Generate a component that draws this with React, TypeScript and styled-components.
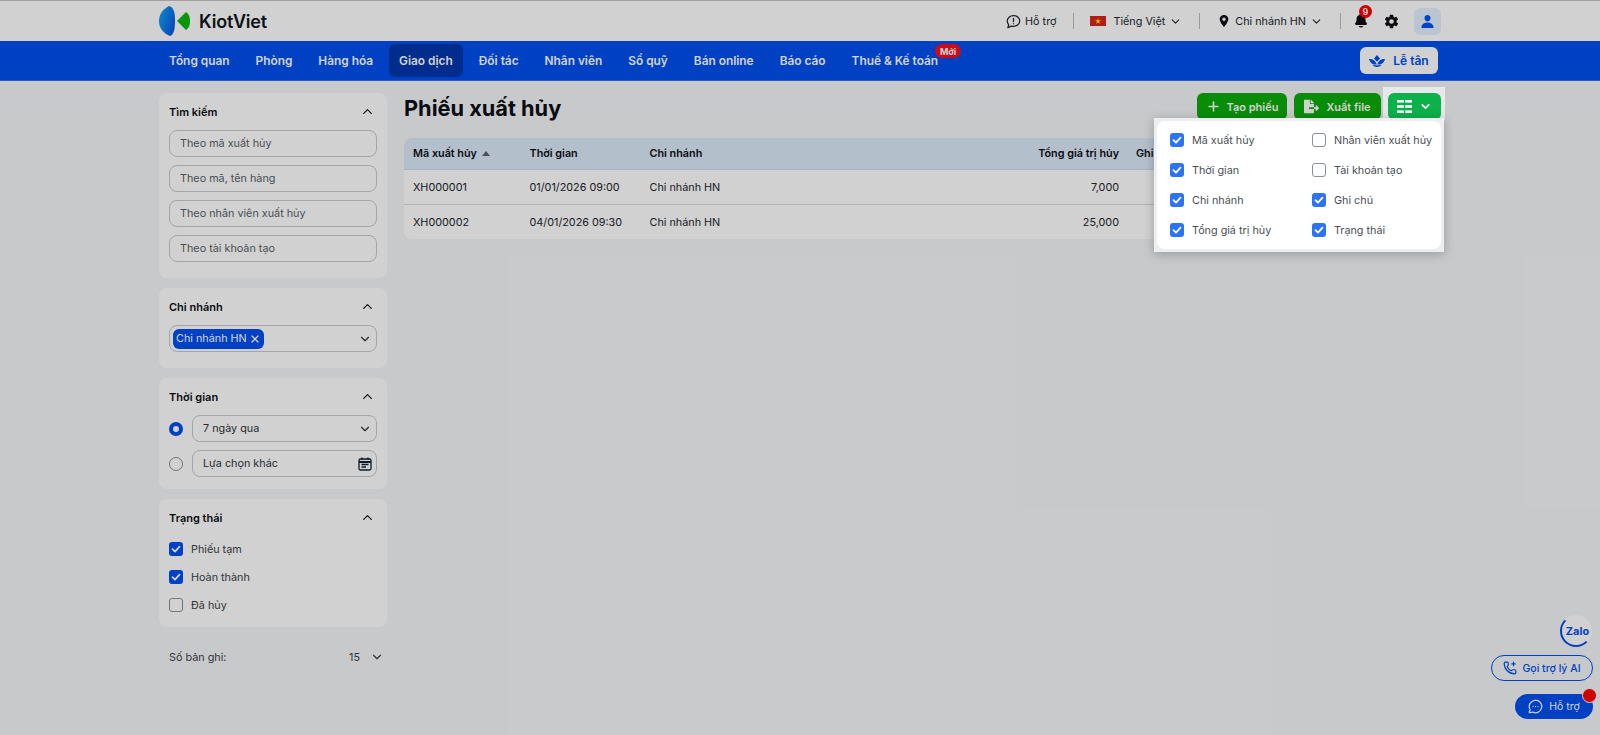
import React from "react";
import styled, { createGlobalStyle } from "styled-components";
import { ChevronDown, ChevronUp, Plus, X, MessageCircleMore } from "lucide-react";
import { IoLocationSharp, IoNotifications, IoSettingsSharp, IoPerson } from "react-icons/io5";
import { FaFileExport } from "react-icons/fa";

const Global = createGlobalStyle`
  html, body { margin: 0; padding: 0; height: 100%; overflow: hidden; }
  body { font-family: Inter, "Noto Sans", sans-serif; font-size: 10.8px; color: #1a1c20; background: #f4f6f8; }
  * { box-sizing: border-box; }
`;

const Page = styled.div`
  position: relative;
  height: 735px;
  width: 1600px;
  overflow: hidden;
`;

const Backdrop = styled.div`
  position: absolute;
  inset: 0;
  z-index: 5;
  background: rgba(0, 0, 0, 0.18);
`;

const Wrap = styled.div`
  width: 1282px;
  margin: 0 auto;
  display: flex;
  align-items: center;
`;

const TopBar = styled.header`
  height: 41px;
  background: #fff;
  border-top: 1px solid #c4c4c4;
`;

const TopInner = styled(Wrap)`
  height: 40px;
`;

const Logo = styled.div`
  display: flex;
  align-items: center;
  gap: 8px;
  font-size: 18px;
  font-weight: 600;
  color: #11151c;
  letter-spacing: -0.2px;
  margin-right: auto;
`;

const TopItem = styled.div`
  display: flex;
  align-items: center;
  gap: 4px;
  color: #23262c;
  svg { flex: none; }
`;

const Divider = styled.span<{ $r?: number }>`
  width: 1px;
  height: 16px;
  background: #bcbcbc;
  margin: 0 ${(p) => p.$r ?? 16}px 0 17px;
`;

const Flag = styled.span`
  display: flex;
  align-items: center;
  justify-content: center;
  width: 16px;
  height: 10px;
  background: #da251d;
  color: #ffe000;
  margin-right: 3px;
`;

const BellBox = styled.div`
  position: relative;
  display: flex;
  width: 16px;
  height: 18px;
  margin-right: 15px;
  color: #0d0f13;
`;

const Count = styled.span`
  position: absolute;
  top: -7px;
  left: 6px;
  width: 13px;
  height: 13px;
  border-radius: 50%;
  background: #f00;
  color: #fff;
  font-size: 9px;
  font-weight: 600;
  display: flex;
  align-items: center;
  justify-content: center;
`;

const Avatar = styled.div`
  width: 27px;
  height: 27px;
  margin-left: 15px;
  border-radius: 6px;
  background: #e5f0ff;
  color: #0052f5;
  display: flex;
  align-items: center;
  justify-content: center;
`;

const NavBar = styled.nav`
  height: 40px;
  background: #0050f0;
  border-bottom: 1px solid #3a6cf0;
`;

const NavInner = styled(Wrap)`
  height: 39px;
`;

const NavList = styled.div`
  display: flex;
  align-items: center;
  gap: 6px;
  margin-right: auto;
`;

const NavItem = styled.div<{ $active?: boolean }>`
  position: relative;
  height: 33px;
  padding: 0 10px;
  display: flex;
  align-items: center;
  border-radius: 6px;
  font-size: 11.86px;
  font-weight: 600;
  color: #fff;
  background: ${(p) => (p.$active ? "#0036ad" : "transparent")};
`;

const NewBadge = styled.span`
  position: absolute;
  top: 0;
  right: -13px;
  width: 26px;
  height: 14px;
  border-radius: 7px;
  background: #f5101f;
  color: #fff;
  font-size: 9px;
  font-weight: 700;
  display: flex;
  align-items: center;
  justify-content: center;
`;

const Reception = styled.button`
  width: 78px;
  height: 27px;
  margin-right: 3px;
  border: 0;
  border-radius: 6px;
  background: #fff;
  color: #0050f0;
  font: 600 12px Inter, sans-serif;
  display: flex;
  align-items: center;
  justify-content: center;
  gap: 8px;
`;

const Body = styled(Wrap)`
  align-items: flex-start;
  gap: 17px;
  padding-top: 12px;
`;

const Sidebar = styled.aside`
  width: 228px;
  flex: none;
  display: flex;
  flex-direction: column;
  gap: 10px;
`;

const Panel = styled.section<{ $pb: number }>`
  background: #fff;
  border-radius: 8px;
  padding: 0 10px ${(p) => p.$pb}px;
`;

const PanelHead = styled.div`
  height: 37px;
  display: flex;
  align-items: center;
  justify-content: space-between;
  font-weight: 600;
  font-size: 11px;
  color: #0c0f14;
  padding-right: 2px;
`;

const FieldStack = styled.div`
  display: flex;
  flex-direction: column;
  gap: 8px;
`;

const Field = styled.div`
  flex: 1 0 auto;
  height: 27px;
  border: 1px solid #c6cad0;
  border-radius: 8px;
  padding: 0 10px;
  display: flex;
  align-items: center;
  justify-content: space-between;
  color: #5a5f68;
  background: #fff;
`;

const ValueField = styled(Field)`
  flex: 1 1 0;
  color: #30343a;
  padding-right: 4px;
`;

const TagField = styled(Field)`
  padding: 0 4px 0 3px;
`;

const Tag = styled.span`
  height: 20px;
  padding: 0 3px;
  border-radius: 6px;
  background: #0050f0;
  color: #fff;
  display: inline-flex;
  align-items: center;
  gap: 2px;
`;

const RadioRow = styled.div`
  display: flex;
  align-items: center;
  gap: 9px;
`;

const Radio = styled.span<{ $on?: boolean }>`
  width: 14px;
  height: 14px;
  flex: none;
  border-radius: 50%;
  background: #fff;
  border: ${(p) => (p.$on ? "4px solid #0050f0" : "1px solid #8b9098")};
`;

const CheckList = styled.div<{ $gap: number }>`
  display: flex;
  flex-direction: column;
  gap: ${(p) => p.$gap}px;
  padding-top: 6px;
`;

const CheckRow = styled.div`
  display: flex;
  align-items: center;
  gap: 8px;
  height: 14px;
  color: #3b3f47;
`;

const Box = styled.span<{ $on?: boolean; $bright?: boolean }>`
  width: 14px;
  height: 14px;
  flex: none;
  border-radius: 3px;
  display: flex;
  align-items: center;
  justify-content: center;
  background: ${(p) => (p.$on ? (p.$bright ? "#2c73f5" : "#0050f0") : "#fff")};
  border: ${(p) => (p.$on ? "0" : "1px solid #8b9098")};
`;

const Records = styled.div`
  display: flex;
  align-items: center;
  padding: 13px 3px 0 10px;
  color: #3b3f47;
  span:first-child { margin-right: auto; }
  svg { margin-left: 10px; }
`;

const Main = styled.main`
  flex: 1;
  min-width: 0;
`;

const TitleRow = styled.div`
  height: 27px;
  display: flex;
  align-items: center;
  justify-content: space-between;
  margin-bottom: 18px;
`;

const Title = styled.h1`
  margin: 2px 0 0;
  font-size: 21.75px;
  font-weight: 700;
  color: #0c0f14;
`;

const Actions = styled.div`
  display: flex;
  gap: 7px;
`;

const ActionBtn = styled.button<{ $w?: number; $gap?: number }>`
  width: ${(p) => p.$w ?? 53}px;
  height: 27px;
  border: 0;
  border-radius: 6px;
  background: #0bac0b;
  color: #fff;
  font: 600 11px Inter, sans-serif;
  white-space: nowrap;
  display: flex;
  align-items: center;
  justify-content: center;
  gap: ${(p) => p.$gap ?? 7}px;
`;

const ColumnSpot = styled.div`
  position: relative;
  z-index: 6;
  display: flex;
  padding: 6px 4px 0 5px;
  margin: -6px -4px 0 -5px;
  background: #e6e8ea;
`;

const ColumnBtn = styled(ActionBtn)`
  background: #0db14b;
`;

const Dropdown = styled.div`
  position: absolute;
  top: 31px;
  right: 1px;
  width: 290px;
  height: 134px;
  padding: 3px;
  background: #eceef0;
  box-shadow: 0 2px 10px rgba(0, 0, 0, 0.25);
`;

const DropInner = styled.div`
  height: 100%;
  padding: 12px 0 0 13px;
  background: #fff;
  border-radius: 8px;
  display: grid;
  grid-template-columns: 142px 1fr;
  grid-auto-rows: 30px;
`;

const DropRow = styled(CheckRow)`
  color: #4a4e56;
  white-space: nowrap;
`;

const Table = styled.div`
  width: 1037px;
  border-radius: 8px;
  overflow: hidden;
  background: #fff;
`;

const Row = styled.div<{ $head?: boolean }>`
  height: ${(p) => (p.$head ? 32 : 34)}px;
  display: grid;
  grid-template-columns: 116.500px 120px 1fr 130px 130px 185px;
  align-items: center;
  padding-left: 9px;
  background: ${(p) => (p.$head ? "#dce9f9" : "#fff")};
  font-weight: ${(p) => (p.$head ? 600 : 400)};
  color: ${(p) => (p.$head ? "#0c0f14" : "#23262c")};
  border-bottom: ${(p) => (p.$head ? "1px solid #c7dcf5" : "none")};
  & + & + & { border-top: 1px solid #d9d9d9; height: 35px; }
`;

const Cell = styled.div<{ $right?: boolean }>`
  text-align: ${(p) => (p.$right ? "right" : "left")};
  padding-right: ${(p) => (p.$right ? "7px" : "0")};
  white-space: nowrap;
`;

const GhiCell = styled(Cell)`
  padding-left: 10px;
`;

const SortMark = styled.span`
  display: inline-block;
  margin-left: 5px;
  width: 0;
  height: 0;
  border-left: 4px solid transparent;
  border-right: 4px solid transparent;
  border-bottom: 5px solid #5a5f68;
  vertical-align: 1px;
`;

const Floats = styled.div`
  position: absolute;
  right: 7px;
  bottom: 16px;
  display: flex;
  flex-direction: column;
  align-items: flex-end;
  gap: 8px;
`;

const ZaloBubble = styled.div`
  width: 32px;
  height: 32px;
  margin-right: 1px;
  padding-left: 3px;
  border-radius: 50%;
  background: #fff;
  border: 2px solid transparent;
  border-left-color: #0050f0;
  border-bottom-color: #0050f0;
  color: #0050f0;
  font-size: 11px;
  font-weight: 700;
  display: flex;
  align-items: center;
  justify-content: center;
`;

const AiPill = styled.div`
  width: 102px;
  height: 26px;
  border-radius: 13px;
  border: 1px solid #0050f0;
  background: #f4f6f8;
  color: #0050f0;
  font-size: 10.5px;
  font-weight: 500;
  display: flex;
  align-items: center;
  justify-content: center;
  gap: 5px;
  margin-bottom: 5px;
`;

const HelpPill = styled.div`
  position: relative;
  width: 78px;
  height: 25px;
  border-radius: 13px;
  background: #0050f0;
  color: #fff;
  font-size: 10.5px;
  display: flex;
  align-items: center;
  justify-content: center;
  gap: 6px;
`;

const RedDot = styled.span`
  position: absolute;
  top: -6px;
  right: -4px;
  width: 15px;
  height: 15px;
  border-radius: 50%;
  background: #f00;
  border: 1px solid #fff;
`;

const Check = () => (
  <svg width="10" height="10" viewBox="0 0 10 10" fill="none" stroke="#fff" strokeWidth="1.8" strokeLinecap="round" strokeLinejoin="round">
    <path d="M1.5 5.2 4 7.6 8.5 2.6" />
  </svg>
);

const CheckItem = ({ label, on }: { label: string; on?: boolean }) => (
  <CheckRow>
    <Box $on={on}>{on && <Check />}</Box>
    {label}
  </CheckRow>
);

const DropItem = ({ label, on }: { label: string; on?: boolean }) => (
  <DropRow>
    <Box $on={on} $bright>{on && <Check />}</Box>
    {label}
  </DropRow>
);

const KiotLogo = () => (
  <svg width="32" height="30" viewBox="0 0 32 30">
    <defs>
      <linearGradient id="lg" x1="0" y1="0" x2="1" y2="0.6">
        <stop offset="0" stopColor="#12aef2" />
        <stop offset="1" stopColor="#0a5ae8" />
      </linearGradient>
    </defs>
    <path d="M10 0C14 1 16 5 16 15 16 25 14 29 11 30 4 27 0 22 0 15 0 8 4 3 10 0Z" fill="url(#lg)" />
    <path d="M18 15 27 6C30 8 31 11 31 15 31 19 30 22 27 24Z" fill="#0bb80b" />
  </svg>
);

const ChatAlert = () => (
  <svg width="15" height="15" viewBox="0 0 24 24" fill="none" stroke="#23262c" strokeWidth="2" strokeLinecap="round" strokeLinejoin="round">
    <path d="M12 2.5c5.6 0 10 3.900 10 8.700s-4.400 8.700-10 8.700c-1.200 0-2.400-.2-3.500-.5L3 22l1.300-4.800C2.900 15.600 2 13.500 2 11.200 2 6.400 6.400 2.500 12 2.500Z" />
    <path d="M12 7v5M12 15.500v.1" />
  </svg>
);

const Star = () => (
  <svg width="6" height="6" viewBox="0 0 10 10" fill="currentColor">
    <path d="M5 0 6.200 3.600H10L7 5.900 8.100 9.500 5 7.300 1.900 9.500 3 5.900 0 3.600H3.800Z" />
  </svg>
);

const Lotus = () => (
  <svg width="16" height="12" viewBox="0 0 16 12" fill="#0050f0">
    <path d="M8 0 11 3.500 8 6.800 5 3.500Z" />
    <path d="M0 4C4 4 7 6 7.600 9.500 3.500 10 1 7.500 0 4ZM16 4C12 4 9 6 8.400 9.500 12.500 10 15 7.500 16 4Z" />
    <path d="M3.500 9.800C6 10.500 10 10.500 12.500 9.800 11.500 11.200 10 12 8 12 6 12 4.500 11.200 3.500 9.800Z" />
  </svg>
);

const CalendarIcon = () => (
  <svg width="14" height="14" viewBox="0 0 14 14" fill="none" stroke="#14202e" strokeWidth="1.300">
    <rect x="1" y="2" width="12" height="11" rx="1.500" />
    <path d="M1 5h12" strokeWidth="2" />
    <path d="M4 .5v2.500M10 .5v2.500M3.500 7.500h7M3.500 10h4.500" />
  </svg>
);

const ColumnsIcon = () => (
  <svg width="15" height="13" viewBox="0 0 15 13" fill="#fff">
    <rect x="0" y="0" width="6.800" height="2.600" />
    <rect x="8.200" y="0" width="6.800" height="2.600" />
    <rect x="0" y="5.200" width="6.800" height="2.600" />
    <rect x="8.200" y="5.200" width="6.800" height="2.600" />
    <rect x="0" y="10.400" width="6.800" height="2.600" />
    <rect x="8.200" y="10.400" width="6.800" height="2.600" />
  </svg>
);

const PhoneSpark = () => (
  <svg width="14" height="14" viewBox="0 0 24 24" fill="none" stroke="currentColor" strokeWidth="2" strokeLinecap="round" strokeLinejoin="round">
    <path d="M13.832 16.568a1 1 0 0 0 1.213-.303l.355-.465A2 2 0 0 1 17 15h3a2 2 0 0 1 2 2v3a2 2 0 0 1-2 2A18 18 0 0 1 2 4a2 2 0 0 1 2-2h3a2 2 0 0 1 2 2v3a2 2 0 0 1-.8 1.600l-.468.351a1 1 0 0 0-.292 1.233 14 14 0 0 0 6.392 6.384" />
    <path d="M18 2v6M15 5h6" />
  </svg>
);

export default function App() {
  return (
    <Page>
      <Global />
      <TopBar>
        <TopInner>
          <Logo><KiotLogo />KiotViet</Logo>
          <TopItem><ChatAlert />Hỗ trợ</TopItem>
          <Divider />
          <TopItem><Flag><Star /></Flag>Tiếng Việt<ChevronDown size={13} /></TopItem>
          <Divider $r={17} />
          <TopItem><IoLocationSharp size={14} color="#0d0f13" />Chi nhánh HN<ChevronDown size={13} /></TopItem>
          <Divider $r={12} />
          <BellBox><IoNotifications size={17} /><Count>9</Count></BellBox>
          <IoSettingsSharp size={15} color="#0d0f13" />
          <Avatar><IoPerson size={15} /></Avatar>
        </TopInner>
      </TopBar>
      <NavBar>
        <NavInner>
          <NavList>
            <NavItem>Tổng quan</NavItem>
            <NavItem>Phòng</NavItem>
            <NavItem>Hàng hóa</NavItem>
            <NavItem $active>Giao dịch</NavItem>
            <NavItem>Đối tác</NavItem>
            <NavItem>Nhân viên</NavItem>
            <NavItem>Sổ quỹ</NavItem>
            <NavItem>Bán online</NavItem>
            <NavItem>Báo cáo</NavItem>
            <NavItem>Thuế &amp; Kế toán<NewBadge>Mới</NewBadge></NavItem>
          </NavList>
          <Reception><Lotus />Lễ tân</Reception>
        </NavInner>
      </NavBar>
      <Body>
        <Sidebar>
          <Panel $pb={16}>
            <PanelHead>Tìm kiếm<ChevronUp size={15} /></PanelHead>
            <FieldStack>
              <Field>Theo mã xuất hủy</Field>
              <Field>Theo mã, tên hàng</Field>
              <Field>Theo nhân viên xuất hủy</Field>
              <Field>Theo tài khoản tạo</Field>
            </FieldStack>
          </Panel>
          <Panel $pb={16}>
            <PanelHead>Chi nhánh<ChevronUp size={15} /></PanelHead>
            <TagField><Tag>Chi nhánh HN<X size={12} strokeWidth={2.500} /></Tag><ChevronDown size={14} color="#30343a" /></TagField>
          </Panel>
          <Panel $pb={12}>
            <PanelHead>Thời gian<ChevronUp size={15} /></PanelHead>
            <FieldStack>
              <RadioRow><Radio $on /><ValueField>7 ngày qua<ChevronDown size={14} /></ValueField></RadioRow>
              <RadioRow><Radio /><ValueField>Lựa chọn khác<CalendarIcon /></ValueField></RadioRow>
            </FieldStack>
          </Panel>
          <Panel $pb={15}>
            <PanelHead>Trạng thái<ChevronUp size={15} /></PanelHead>
            <CheckList $gap={14}>
              <CheckItem label="Phiếu tạm" on />
              <CheckItem label="Hoàn thành" on />
              <CheckItem label="Đã hủy" />
            </CheckList>
          </Panel>
          <Records><span>Số bản ghi:</span><span>15</span><ChevronDown size={14} /></Records>
        </Sidebar>
        <Main>
          <TitleRow>
            <Title>Phiếu xuất hủy</Title>
            <Actions>
              <ActionBtn $w={90} $gap={6}><Plus size={15} strokeWidth={2.500} />Tạo phiếu</ActionBtn>
              <ActionBtn $w={87}><FaFileExport size={15} />Xuất file</ActionBtn>
              <ColumnSpot>
                <ColumnBtn $gap={7}><ColumnsIcon /><ChevronDown size={13} strokeWidth={3} /></ColumnBtn>
                <Dropdown>
                  <DropInner>
                    <DropItem label="Mã xuất hủy" on />
                    <DropItem label="Nhân viên xuất hủy" />
                    <DropItem label="Thời gian" on />
                    <DropItem label="Tài khoản tạo" />
                    <DropItem label="Chi nhánh" on />
                    <DropItem label="Ghi chú" on />
                    <DropItem label="Tổng giá trị hủy" on />
                    <DropItem label="Trạng thái" on />
                  </DropInner>
                </Dropdown>
              </ColumnSpot>
            </Actions>
          </TitleRow>
          <Table>
            <Row $head>
              <Cell>Mã xuất hủy<SortMark /></Cell>
              <Cell>Thời gian</Cell>
              <Cell>Chi nhánh</Cell>
              <Cell $right>Tổng giá trị hủy</Cell>
              <GhiCell>Ghi chú</GhiCell>
              <Cell>Trạng thái</Cell>
            </Row>
            <Row>
              <Cell>XH000001</Cell>
              <Cell>01/01/2026 09:00</Cell>
              <Cell>Chi nhánh HN</Cell>
              <Cell $right>7,000</Cell>
              <GhiCell />
              <Cell>Hoàn thành</Cell>
            </Row>
            <Row>
              <Cell>XH000002</Cell>
              <Cell>04/01/2026 09:30</Cell>
              <Cell>Chi nhánh HN</Cell>
              <Cell $right>25,000</Cell>
              <GhiCell />
              <Cell>Hoàn thành</Cell>
            </Row>
          </Table>
        </Main>
      </Body>
      <Floats>
        <ZaloBubble>Zalo</ZaloBubble>
        <AiPill><PhoneSpark />Gọi trợ lý AI</AiPill>
        <HelpPill><MessageCircleMore size={15} />Hỗ trợ<RedDot /></HelpPill>
      </Floats>
      <Backdrop />
    </Page>
  );
}
